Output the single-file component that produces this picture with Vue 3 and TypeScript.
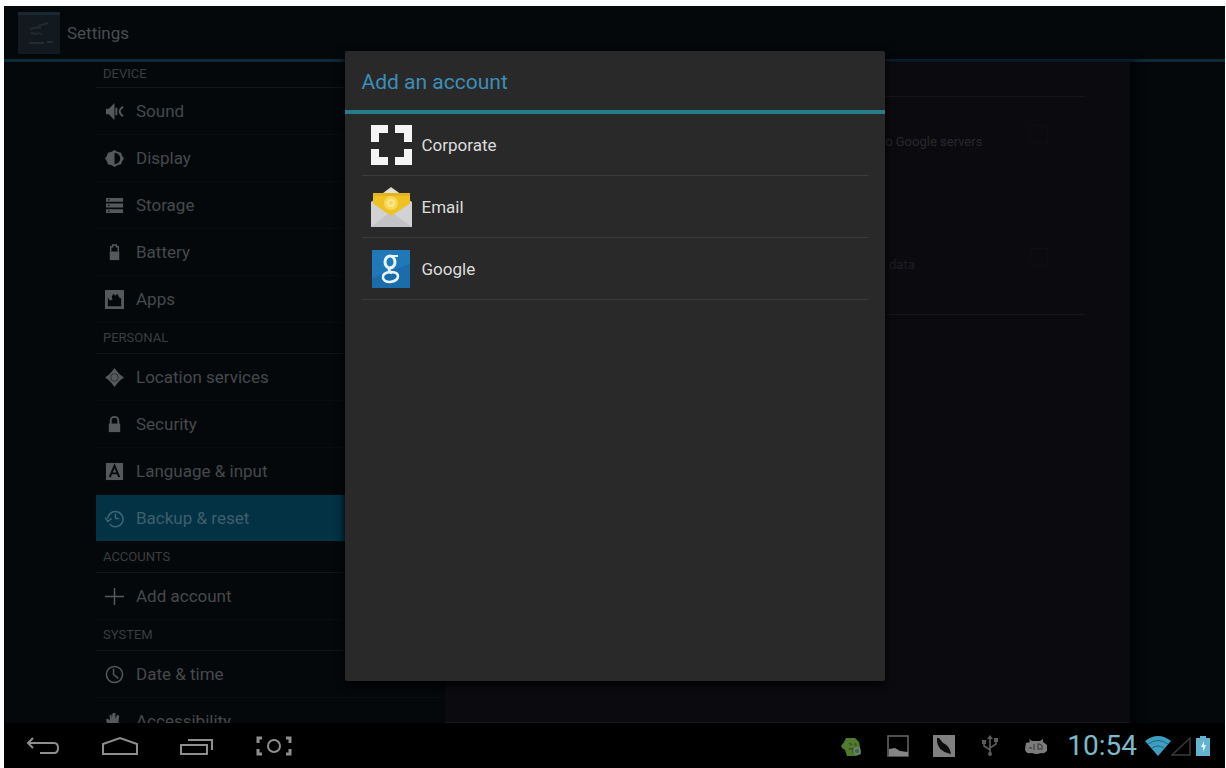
<script setup lang="ts">
import { ref } from 'vue'

interface Item {
  id: string
  label: string
}
interface Section {
  title: string
  items: Item[]
}

const sections: Section[] = [
  {
    title: 'DEVICE',
    items: [
      { id: 'sound', label: 'Sound' },
      { id: 'display', label: 'Display' },
      { id: 'storage', label: 'Storage' },
      { id: 'battery', label: 'Battery' },
      { id: 'apps', label: 'Apps' },
    ],
  },
  {
    title: 'PERSONAL',
    items: [
      { id: 'location', label: 'Location services' },
      { id: 'security', label: 'Security' },
      { id: 'language', label: 'Language & input' },
      { id: 'backup', label: 'Backup & reset' },
    ],
  },
  { title: 'ACCOUNTS', items: [{ id: 'add', label: 'Add account' }] },
  {
    title: 'SYSTEM',
    items: [
      { id: 'date', label: 'Date & time' },
      { id: 'accessibility', label: 'Accessibility' },
    ],
  },
]

const accounts: Item[] = [
  { id: 'corporate', label: 'Corporate' },
  { id: 'email', label: 'Email' },
  { id: 'google', label: 'Google' },
]

const selected = ref('backup')
const backupData = ref(false)
const autoRestore = ref(false)
</script>

<template>
  <div class="frame">
    <div class="device">
      <div class="stage">
        <header class="bar">
          <svg class="app-icon" viewBox="0 0 42 42" aria-hidden="true">
            <rect width="42" height="42" fill="#12191f" />
            <rect width="42" height="3" fill="#1b2732" />
            <path d="M12 17l9-2M23 13l7-2M13 21l6 1M11 31h15M29 30h6" stroke="#232b33" stroke-width="2" fill="none" />
            <path d="M22 12v5M19 20l5 3" stroke="#1e262e" stroke-width="2" />
          </svg>
          <h1>Settings</h1>
        </header>

        <div class="body">
          <nav class="side" aria-label="Settings">
            <section v-for="s in sections" :key="s.title">
              <h2>{{ s.title }}</h2>
              <button
                v-for="i in s.items"
                :key="i.id"
                type="button"
                class="item"
                :class="{ active: selected === i.id }"
                @click="selected = i.id"
              >
                <svg class="ico" viewBox="0 0 20 20" aria-hidden="true">
                  <template v-if="i.id === 'sound'">
                    <path d="M1 7h3l6-6v18l-6-6H1z" fill="currentColor" />
                    <path d="M12 6v8M19 5q-7 5 0 10" stroke="currentColor" stroke-width="2" fill="none" />
                  </template>
                  <template v-else-if="i.id === 'display'">
                    <path d="M10 1l3 2 4 1 1 3 2 3-2 3-1 3-4 1-3 2-3-2-4-1-1-3-2-3 2-3 1-3 4-1z" fill="currentColor" />
                    <path d="M10 4a6 6 0 0 1 0 12z" fill="#04080b" />
                  </template>
                  <template v-else-if="i.id === 'storage'">
                    <path d="M1 2h18v4H1zM1 8h18v4H1zM1 14h18v4H1z" fill="currentColor" />
                    <path d="M3 4h2M3 10h2M3 16h2" stroke="#04080b" />
                  </template>
                  <template v-else-if="i.id === 'battery'">
                    <path d="M6 9V4h2V2h4v2h2v5" stroke="currentColor" stroke-width="1.6" fill="none" />
                    <path d="M5 9h10v9H5z" fill="currentColor" />
                  </template>
                  <template v-else-if="i.id === 'apps'">
                    <path
                      d="M0 0h20v20H0zM3 8v9h14V9l-2-1-2-4-2 2-2-2-2 3 1 3-3 1z"
                      fill="currentColor"
                      fill-rule="evenodd"
                    />
                  </template>
                  <template v-else-if="i.id === 'location'">
                    <path d="M10 0l3 4 3 3 4 3-4 3-3 3-3 4-3-4-3-3-4-3 4-3 3-3z" fill="currentColor" />
                    <circle cx="10" cy="10" r="4" stroke="#2a2d2f" fill="none" />
                  </template>
                  <template v-else-if="i.id === 'security'">
                    <path d="M6 10V6a4 4 0 0 1 8 0v4" stroke="currentColor" stroke-width="2" fill="none" />
                    <path d="M4 9h12v9H4z" fill="currentColor" />
                  </template>
                  <template v-else-if="i.id === 'language'">
                    <path d="M1 1h18v18H1z" fill="currentColor" />
                    <path d="M5 16l5-12 5 12M7 12h6" stroke="#04080b" stroke-width="2" fill="none" />
                  </template>
                  <template v-else-if="i.id === 'backup'">
                    <path
                      d="M3 10a8 8 0 1 1 2 6M0 9l3 4 4-3M11 5v5l4 0"
                      stroke="currentColor"
                      stroke-width="1.6"
                      fill="none"
                    />
                  </template>
                  <template v-else-if="i.id === 'add'">
                    <path d="M10 1v18M0 10h20" stroke="currentColor" stroke-width="1.6" />
                  </template>
                  <template v-else-if="i.id === 'date'">
                    <circle cx="10" cy="10" r="8.5" stroke="currentColor" stroke-width="1.6" fill="none" />
                    <path d="M9 4v6l5 4" stroke="currentColor" stroke-width="1.6" fill="none" />
                  </template>
                  <template v-else>
                    <path d="M4 18L1 8l2-1 2 2V3h2v4l1-6h3v6l2-4 2 1-1 8 2-1v5l-4 3z" fill="currentColor" />
                    <circle cx="17" cy="15" r="2" fill="currentColor" />
                  </template>
                </svg>
                <span>{{ i.label }}</span>
              </button>
            </section>
          </nav>

          <main class="pane">
            <div class="prefs">
              <label class="pref first">
                <span class="desc">to Google servers</span>
                <input v-model="backupData" type="checkbox" />
              </label>
              <label class="pref second">
                <span class="desc">data</span>
                <input v-model="autoRestore" type="checkbox" />
              </label>
            </div>
          </main>
        </div>

        <div class="overlay">
          <div class="dialog" role="dialog" aria-labelledby="dlg-title">
            <h2 id="dlg-title">Add an account</h2>
            <ul>
              <li v-for="a in accounts" :key="a.id">
                <button type="button">
                  <svg viewBox="0 0 42 42" aria-hidden="true">
                    <template v-if="a.id === 'corporate'">
                      <path
                        d="M1 1h17v8H9v9H1zM25 1h17v17h-8V9h-9zM1 25h8v8h9v8H1zM34 25h8v16H25v-8h9z"
                        fill="#f4f4f4"
                      />
                    </template>
                    <template v-else-if="a.id === 'email'">
                      <path d="M1 16L21 1l21 15v25H1z" fill="#d3cfc2" />
                      <path d="M3 7h37v13L21 31 3 20z" fill="#eec222" />
                      <path d="M14 7l7-5 7 5z" fill="#e4e0d2" />
                      <path d="M3 7h37v3H3z" fill="#e3b41d" />
                      <circle cx="21" cy="17" r="7" fill="#f6d95c" />
                      <circle cx="21" cy="17" r="3" fill="none" stroke="#fbeb9c" stroke-width="1.6" />
                      <path d="M1 16l20 14 21-14v25H1z" fill="#d2d1d3" />
                      <path d="M1 41l17-13 3 2 3-2 18 13z" fill="#c3c2c7" />
                    </template>
                    <template v-else>
                      <rect x="2" y="2" width="38" height="38" fill="#1f78b8" />
                      <path d="M2 30l38-14v24H2z" fill="#1a6cab" />
                      <g fill="none" stroke="#e9f5fb">
                        <ellipse cx="20" cy="14" rx="5" ry="6" stroke-width="3" />
                        <path d="M22 8h6" stroke-width="2" />
                        <path d="M22 19q-6 3 0 6" stroke-width="2.6" />
                        <path d="M20 24q-8 1-7 6 1 4 7 4 8-1 8-6 0-4-8-4z" stroke-width="2.6" />
                      </g>
                    </template>
                  </svg>
                  <span>{{ a.label }}</span>
                </button>
              </li>
            </ul>
          </div>
        </div>
      </div>

      <footer class="sys">
        <div class="keys">
          <button type="button" aria-label="Back">
            <svg viewBox="0 0 36 20">
              <path d="M8 2L3 7l5 5M3 7h26q4 0 4 5t-4 5H15" />
            </svg>
          </button>
          <button type="button" aria-label="Home">
            <svg viewBox="0 0 36 20">
              <path d="M1 18V8l17-6 17 6v10z" />
            </svg>
          </button>
          <button type="button" aria-label="Recent apps">
            <svg viewBox="0 0 36 20">
              <path d="M2 9h26v9H2zM9 4h24v10" />
            </svg>
          </button>
          <button type="button" aria-label="Screenshot">
            <svg viewBox="0 0 36 20">
              <path d="M6 2H2v5M2 13v5h4M30 2h4v5M34 13v5h-4" stroke-width="3" />
              <circle cx="18" cy="10" r="6" />
            </svg>
          </button>
        </div>
        <div class="status">
          <div class="notes">
            <svg viewBox="0 0 22 22" aria-hidden="true">
              <path d="M0 11l3-4 2-4h9l4 4 1 5 1 7-5 2H6l-2-6-3-2z" fill="#507a2c" />
              <path d="M8 8l3 2M14 8l1 3M8 14h4v4" stroke="#3a5a22" stroke-width="2" fill="none" />
              <circle cx="16" cy="16" r="3" stroke="#6d8774" stroke-width="1.4" fill="#46604a" />
            </svg>
            <svg viewBox="0 0 22 22" aria-hidden="true">
              <rect x="1" y="1" width="20" height="20" fill="none" stroke="#626262" stroke-width="1.6" />
              <path d="M2 14l6-1 5 3 8 1v4H2z" fill="#858585" />
            </svg>
            <svg viewBox="0 0 22 22" aria-hidden="true">
              <rect width="22" height="22" fill="#808080" />
              <path d="M4 3q-1 13 14 16-1-8-8-11L6 3z" fill="#0c0c0c" />
            </svg>
            <svg viewBox="0 0 22 22" aria-hidden="true">
              <path d="M11 3v16M11 15L5 11V8M11 13l6-4V6" stroke="#5c5c5c" stroke-width="1.6" fill="none" />
              <path d="M8 4l3-4 3 4zM3 5h4v4H3zM15 3h4v4h-4z" fill="#5c5c5c" />
              <circle cx="11" cy="19" r="2" fill="#5c5c5c" />
            </svg>
            <svg viewBox="0 0 22 22" aria-hidden="true">
              <path d="M1 8l4-1-1-3 3 2h8l3-2v3l4 3v6q-3 3-6 2-5 2-9 0-7 1-7-4z" fill="#7c7c7c" />
              <path d="M4 13h3M9 9v6M13 9q5 0 4 5h-4z" stroke="#474747" stroke-width="1.4" fill="none" />
            </svg>
          </div>
          <time>10:54</time>
          <svg class="wifi" viewBox="0 0 26 20" aria-hidden="true">
            <path d="M0 5q13-10 26 0L13 20z" fill="#3d9fc0" />
            <path d="M3 8q10-7 20 0M7 12q6-4 12 0" stroke="#1f6681" stroke-width="1" fill="none" />
          </svg>
          <svg class="signal" viewBox="0 0 20 20" aria-hidden="true">
            <path d="M1 19L19 2v17z" stroke="#3c3c3c" stroke-width="1.4" fill="none" />
          </svg>
          <svg class="battery" viewBox="0 0 14 20" aria-hidden="true">
            <path d="M4 0h6v2h4v18H0V2h4z" fill="#62b4cf" />
            <path d="M8 5l-3 6h2v5l3-7H8z" fill="#e4f6fb" />
          </svg>
        </div>
      </footer>
    </div>
  </div>
</template>

<style>
body {
  margin: 0;
  background: #fdfdfd;
}
</style>

<style scoped>
.frame {
  box-sizing: border-box;
  height: 100vh;
  padding: 6px 1px 0 4px;
  font-family: Roboto, "Noto Sans", sans-serif;
}
.device {
  height: 100%;
  display: flex;
  flex-direction: column;
  background: #000;
}
h1,
h2,
ul {
  margin: 0;
  padding: 0;
  font-weight: 400;
}
button {
  border: 0;
  background: none;
  padding: 0;
  font: inherit;
  color: inherit;
  text-align: left;
}
.stage {
  position: relative;
  flex: 1;
  min-height: 0;
  display: flex;
  flex-direction: column;
  overflow: hidden;
  background: #04080b;
}
.bar {
  box-sizing: border-box;
  height: 56px;
  flex: none;
  display: flex;
  align-items: center;
  gap: 7px;
  padding: 0 14px;
  border-bottom: 3px solid #0d2a36;
}
.app-icon {
  width: 42px;
  height: 42px;
}
.bar h1 {
  font-size: 17px;
  color: #4a4d50;
}
.body {
  flex: 1;
  min-height: 0;
  display: grid;
  grid-template-columns: 349fr 685fr;
  padding: 0 95px 0 92px;
}
.side {
  overflow: hidden;
}
.side h2 {
  box-sizing: border-box;
  height: 31px;
  line-height: 30px;
  padding-left: 7px;
  font-size: 13px;
  color: #3c3d3f;
  border-bottom: 1px solid #121518;
}
.side section:first-child h2 {
  height: 26px;
  line-height: 24px;
}
.item {
  box-sizing: border-box;
  width: 100%;
  height: 47px;
  display: flex;
  align-items: center;
  gap: 12px;
  padding-left: 9px;
  font-size: 17px;
  color: #47494b;
  border-bottom: 1px solid #080c0f;
}
.item.active {
  background: #033245;
  color: #3f5f6b;
}
.ico {
  width: 19px;
  height: 19px;
  color: #56585a;
}
.active .ico {
  color: #3f6573;
}
.pane {
  background: #0b0a0f;
  border-bottom: 1px solid #15141a;
  box-shadow: 6px 0 8px #010304;
  padding: 34px 45px 0 30px;
}
.prefs {
  border-top: 1px solid #16151b;
  border-bottom: 1px solid #16151b;
}
.pref {
  display: grid;
  grid-template-columns: 1fr 149px 55px;
  align-items: start;
  font-size: 13px;
  line-height: 16px;
  color: #29282d;
}
.pref.first {
  height: 123px;
}
.pref.second {
  height: 94px;
}
.desc {
  grid-column: 2;
  padding-top: 37px;
}
.second .desc {
  padding-left: 8px;
  color: #1f1e23;
}
.pref input {
  appearance: none;
  grid-column: 3;
  width: 18px;
  height: 18px;
  margin: 28px 0 0;
  border: 1px solid #0e0d12;
}
.overlay {
  position: absolute;
  inset: 0;
  display: flex;
  justify-content: center;
  padding: 45px 16px 42px;
}
.dialog {
  width: 540px;
  background: #292929;
  border-radius: 2px;
  box-shadow: 0 3px 10px #000;
}
.dialog h2 {
  height: 59px;
  line-height: 63px;
  padding-left: 17px;
  font-size: 21px;
  color: #3c8fb8;
  border-bottom: 4px solid #277d8c;
}
.dialog ul {
  list-style: none;
  padding: 0 17px;
}
.dialog li {
  border-bottom: 1px solid #3b3b3b;
}
.dialog li button {
  width: 100%;
  height: 61px;
  display: flex;
  align-items: center;
  gap: 10px;
  padding-left: 8px;
  font-size: 17px;
  color: #dcdcdc;
}
.dialog li svg {
  width: 42px;
  height: 42px;
}
.sys {
  flex: none;
  height: 45px;
  display: flex;
  align-items: center;
  justify-content: space-between;
  padding: 0 15px 0 21px;
}
.keys {
  display: flex;
  gap: 41px;
}
.keys button {
  display: flex;
}
.keys svg {
  width: 36px;
  height: 20px;
  fill: none;
  stroke: #8e8e8e;
  stroke-width: 2;
}
.status {
  display: flex;
  align-items: center;
}
.notes {
  display: flex;
  gap: 24px;
  margin-right: 20px;
}
.notes svg {
  width: 22px;
  height: 22px;
}
time {
  font-size: 28px;
  line-height: 32px;
  color: #7cb9cb;
  margin-right: 8px;
}
.wifi {
  width: 26px;
  height: 20px;
}
.signal {
  width: 20px;
  height: 20px;
  margin-right: 5px;
}
.battery {
  width: 14px;
  height: 20px;
}
</style>
